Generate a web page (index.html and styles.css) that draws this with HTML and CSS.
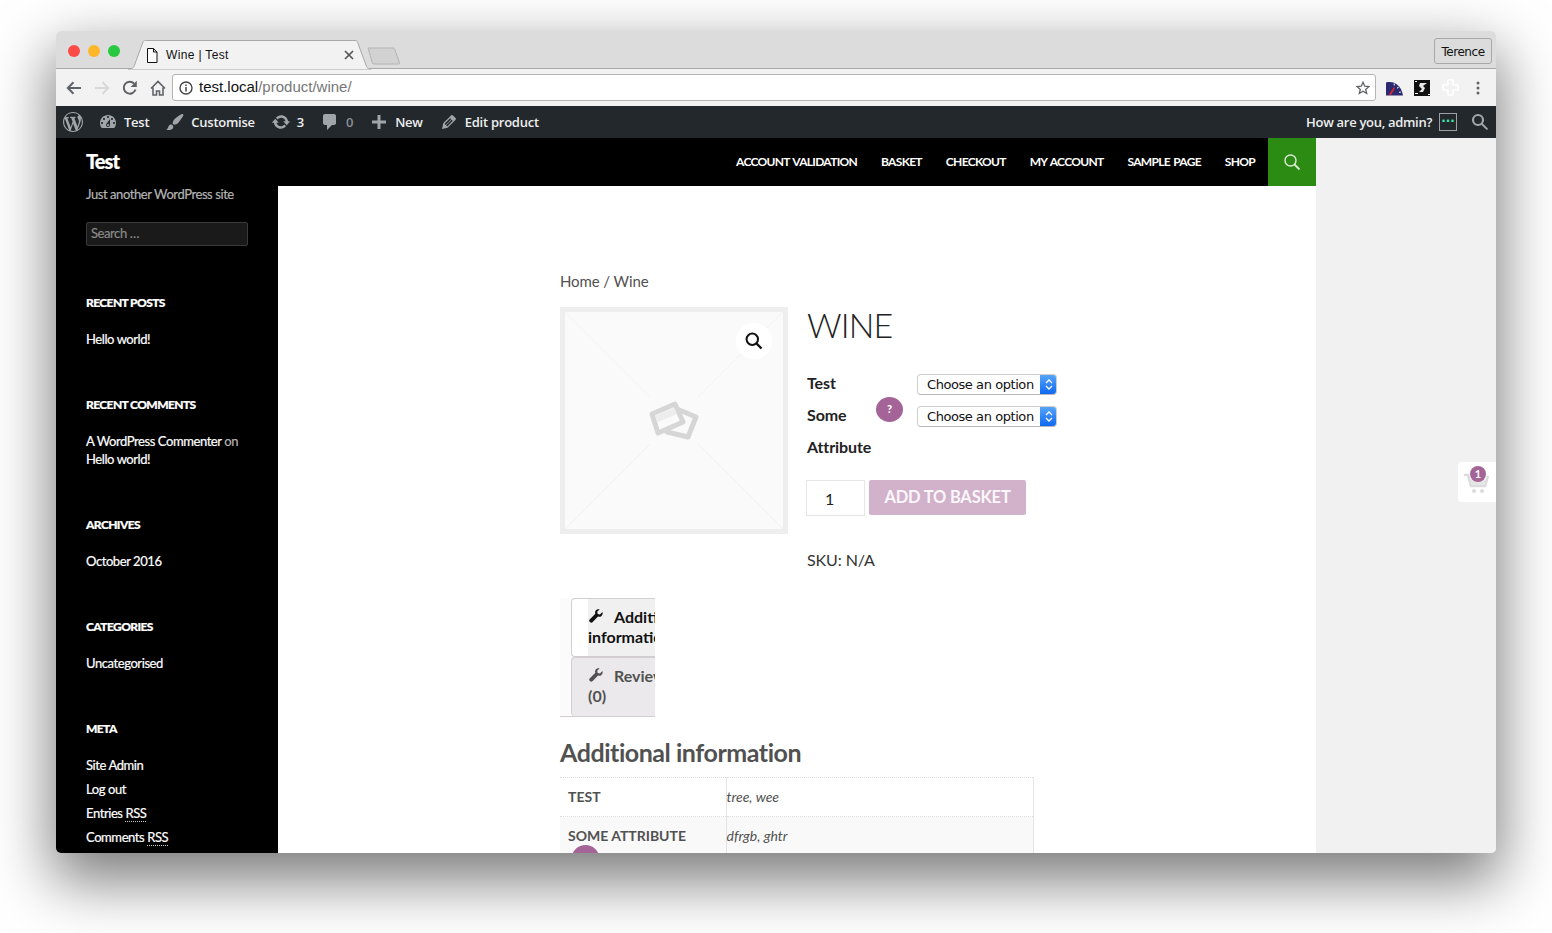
FILE: index.html
```html
<!DOCTYPE html>
<html lang="en">
<head>
<meta charset="utf-8">
<title>Wine | Test</title>
<link rel="stylesheet" href="styles.css">
</head>
<body>
<div class="window">
  <div class="tabbar">
    <div class="lights"><span class="light red"></span><span class="light yellow"></span><span class="light green"></span></div>
    <div class="tab">
      <svg class="tab-shape" width="243" height="30" viewBox="0 0 243 30"><path d="M0 28.500h3c1.500 0 2.400-.6 3-2L15 2c.5-1.100 1-1.500 2.500-1.500H227c1.500 0 2 .4 2.500 1.500l9 24.500c.6 1.400 1.500 2 3 2H243V30H0z" fill="#f2f2f2" stroke="#a8a8a8"/></svg>
      <svg class="tab-doc" width="12" height="15" viewBox="0 0 12 15"><path d="M1.500.5h6l3.500 3.500v10.500h-9.500zM7.500.5V4H11" fill="#fff" stroke="#111" stroke-width="1"/></svg>
      <span class="tab-title">Wine | Test</span>
      <svg class="tab-close" width="10" height="10" viewBox="0 0 10 10"><path d="M1 1l8 8M9 1L1 9" stroke="#555" stroke-width="1.700"/></svg>
    </div>
    <svg class="newtab" width="34" height="18" viewBox="0 0 34 18"><path d="M1 1h25c.8 0 1.300.3 1.600 1l5 14c.2.600-.2 1-.8 1H7c-.8 0-1.300-.3-1.600-1z" fill="#d2d2d2" stroke="#b4b4b4"/></svg>
    <div class="profile">Terence</div>
  </div>
  <div class="toolbar">
    <svg class="nav-ico" width="16" height="14" viewBox="0 0 16 14"><path d="M15 7H2M7.500 1.200L1.800 7l5.700 5.800" fill="none" stroke="#5f6368" stroke-width="2"/></svg>
    <svg class="nav-ico" width="16" height="14" viewBox="0 0 16 14"><path d="M1 7h13M8.500 1.200L14.200 7l-5.700 5.800" fill="none" stroke="#d8d8d8" stroke-width="2"/></svg>
    <svg class="nav-ico" width="16" height="16" viewBox="0 0 16 16"><path d="M13.500 9.500A6 6 0 1 1 12.200 3.600" fill="none" stroke="#5f6368" stroke-width="2"/><path d="M14.800.8v6.200H8.600z" fill="#5f6368"/></svg>
    <svg class="nav-ico" width="16" height="16" viewBox="0 0 16 16"><path d="M1 8.500L8 1.500l7 7M3 7.500V15h3.500v-4h3v4H13V7.500" fill="none" stroke="#5f6368" stroke-width="1.600"/></svg>
    <div class="omnibox">
      <svg class="info" width="14" height="14" viewBox="0 0 14 14"><circle cx="7" cy="7" r="6" fill="none" stroke="#444" stroke-width="1.400"/><path d="M7 6v4.500M7 3.400v1.500" stroke="#444" stroke-width="1.500"/></svg>
      <span class="url"><span class="url-host">test.local</span>/product/wine/</span>
      <svg class="star" width="14" height="14" viewBox="0 0 14 14"><path d="M7 1.300l1.700 3.900 4.200.4-3.200 2.800 1 4.100L7 10.300l-3.700 2.200 1-4.100L1.100 5.600l4.200-.4z" fill="none" stroke="#5f6368" stroke-width="1.300"/></svg>
    </div>
    <svg class="ext" width="17" height="16" viewBox="0 0 17 16"><path d="M0 15.500V2.500C8 .5 15 5 17 15.500z" fill="#2c2a6e"/><path d="M3 14.500L8 7l1 1-4 7z" fill="#e3232f"/><path d="M8 3.500l.5 2M12.500 7l-1.300 1.300M15 12l-2 .3" stroke="#cfd4ee" stroke-width="1.200"/></svg>
    <svg class="ext ext-second" width="17" height="16" viewBox="0 0 17 16"><rect width="16" height="16" fill="#111"/><path d="M6 3h7L9 6l2 2-2 4H5l3-3-3-3z" fill="#e8e8e8"/><path d="M1 1.500h2M14 14.500h2M1 13.500h3" stroke="#fff"/></svg>
    <svg class="ext ext-ghost" width="17" height="17" viewBox="0 0 17 17"><path d="M6 1h5v5h5v5h-5v5H6v-5H1V6h5z" fill="none" stroke="#fff" stroke-width="1.600" stroke-linejoin="round"/></svg>
    <svg class="ext-menu" width="4" height="14" viewBox="0 0 4 14"><path d="M2 0.500a1.500 1.500 0 1 1 0 3 1.500 1.500 0 0 1 0-3zm0 5a1.500 1.500 0 1 1 0 3 1.500 1.500 0 0 1 0-3zm0 5a1.500 1.500 0 1 1 0 3 1.500 1.500 0 0 1 0-3z" fill="#5f6368"/></svg>
  </div>
  <div class="adminbar">
    <a class="ab-logo"><svg width="20" height="20" viewBox="0 0 20 20"><path class="ab-fill" d="M20 10c0-5.510-4.490-10-10-10C4.480 0 0 4.490 0 10c0 5.520 4.480 10 10 10 5.510 0 10-4.480 10-10zM7.780 15.370L4.370 6.220c.55-.02 1.170-.08 1.170-.08.5-.06.44-1.130-.06-1.110 0 0-1.450.11-2.370.11-.18 0-.37 0-.58-.01C4.120 2.690 6.870 1.110 10 1.110c2.330 0 4.450.87 6.050 2.340-.68-.11-1.650.39-1.650 1.580 0 .74.45 1.360.9 2.100.35.61.55 1.360.55 2.460 0 1.490-1.400 5-1.400 5l-3.030-8.370c.54-.02.82-.17.82-.17.5-.05.44-1.250-.06-1.220 0 0-1.440.12-2.380.12-.87 0-2.330-.12-2.330-.12-.5-.03-.56 1.200-.06 1.220l.92.08 1.260 3.410zM17.410 10c.24-.64.74-1.870.43-4.250.7 1.290 1.050 2.710 1.050 4.250 0 3.290-1.730 6.240-4.400 7.780.97-2.590 1.940-5.200 2.920-7.780zM6.100 18.090C3.120 16.650 1.110 13.530 1.110 10c0-1.300.23-2.480.72-3.590C3.250 10.300 4.670 14.200 6.100 18.090zm4.030-6.630l2.580 6.980c-.86.29-1.760.45-2.710.45-.79 0-1.570-.11-2.290-.33.81-2.380 1.620-4.740 2.420-7.100z"/></svg></a>
    <a class="ab-item"><svg width="20" height="20" viewBox="0 0 20 20"><path class="ab-fill" d="M3.760 16h12.480c1.100-1.370 1.760-3.110 1.760-5 0-4.420-3.580-8-8-8s-8 3.580-8 8c0 1.890.66 3.630 1.760 5zM10 4c.55 0 1 .45 1 1s-.45 1-1 1-1-.45-1-1 .45-1 1-1zM6 6c.55 0 1 .45 1 1s-.45 1-1 1-1-.45-1-1 .45-1 1-1zm8 0c.55 0 1 .45 1 1s-.45 1-1 1-1-.45-1-1 .45-1 1-1zm-5.370 5.550L12 7v6c0 1.100-.9 2-2 2s-2-.9-2-2c0-.57.24-1.080.63-1.450zM4 10c.55 0 1 .45 1 1s-.45 1-1 1-1-.45-1-1 .45-1 1-1zm12 0c.55 0 1 .45 1 1s-.45 1-1 1-1-.45-1-1 .45-1 1-1zm-5 3c0-.55-.45-1-1-1s-1 .45-1 1 .45 1 1 1 1-.45 1-1z" fill-rule="evenodd"/></svg>Test</a>
    <a class="ab-item"><svg width="20" height="20" viewBox="0 0 20 20"><path class="ab-fill" d="M18.330 3.570s.27-.8-.31-1.360c-.53-.52-1.220-.24-1.220-.24-.61.3-5.760 3.470-7.670 5.570-.86.96-2.060 3.790-1.090 4.820.92.98 3.960-.17 4.790-1 2.060-2.060 5.210-7.170 5.500-7.790zM1.400 17.650c2.370-1.560 1.460-3.410 3.230-4.640.93-.65 2.220-.62 3.080.29.63.67.8 2.570-.16 3.460-1.570 1.450-4 1.550-6.150.89z"/></svg>Customise</a>
    <a class="ab-item"><svg width="20" height="20" viewBox="0 0 20 20"><path class="ab-fill" d="M10.200 3.280c3.530 0 6.430 2.610 6.920 6h2.080l-3.500 4-3.500-4h2.320c-.45-1.970-2.210-3.450-4.320-3.450-1.450 0-2.730.71-3.540 1.780L4.950 5.660C6.230 4.200 8.110 3.280 10.200 3.280zm-.4 13.440c-3.520 0-6.430-2.610-6.920-6H.8l3.500-4c1.170 1.330 2.330 2.670 3.500 4H5.480c.45 1.970 2.210 3.450 4.320 3.450 1.450 0 2.730-.71 3.540-1.780l1.710 1.950c-1.280 1.460-3.150 2.380-5.250 2.380z"/></svg>3</a>
    <a class="ab-item ab-dim"><svg width="20" height="20" viewBox="0 0 20 20"><path class="ab-fill" d="M5 2h9c1.100 0 2 .9 2 2v7c0 1.100-.9 2-2 2h-2l-5 5v-5H5c-1.100 0-2-.9-2-2V4c0-1.100.9-2 2-2z"/></svg>0</a>
    <a class="ab-item"><svg width="20" height="20" viewBox="0 0 20 20"><path class="ab-fill" d="M17 8.500v3h-5.500V17h-3v-5.500H3v-3h5.500V3h3v5.500z"/></svg>New</a>
    <a class="ab-item"><svg width="20" height="20" viewBox="0 0 20 20"><path class="ab-fill" d="M13.890 3.390l2.710 2.720c.46.46.42 1.240.03 1.640l-8.010 8.020-5.560 1.160 1.160-5.580s7.600-7.630 7.990-8.030c.39-.39 1.220-.39 1.680.07zm-2.730 2.790l-5.590 5.610 1.110 1.110 5.540-5.650zm-2.970 8.230l5.580-5.600-1.070-1.080-5.590 5.600z"/></svg>Edit product</a>
    <div class="ab-right">
      <span class="ab-howdy">How are you, admin?</span>
      <span class="ab-avatar">···</span>
      <svg class="ab-search" width="20" height="20" viewBox="0 0 20 20"><circle class="ab-ring" cx="8" cy="8" r="5"/><path class="ab-fill" d="M11 12.400l1.400-1.400 5.200 5.200c.4.400.4 1 0 1.400-.4.400-1 .4-1.400 0z"/></svg>
    </div>
  </div>
  <div class="site">
    <aside class="sidebar">
      <div class="site-title">Test</div>
      <p class="tagline">Just another WordPress site</p>
      <div class="side-search">Search …</div>
      <section class="widget">
        <h2>Recent Posts</h2>
        <ul><li>Hello world!</li></ul>
      </section>
      <section class="widget">
        <h2>Recent Comments</h2>
        <p class="comment">A WordPress Commenter <span class="on">on</span> Hello world!</p>
      </section>
      <section class="widget">
        <h2>Archives</h2>
        <ul><li>October 2016</li></ul>
      </section>
      <section class="widget">
        <h2>Categories</h2>
        <ul><li>Uncategorised</li></ul>
      </section>
      <section class="widget">
        <h2>Meta</h2>
        <ul class="meta">
          <li>Site Admin</li>
          <li>Log out</li>
          <li>Entries <abbr>RSS</abbr></li>
          <li>Comments <abbr>RSS</abbr></li>
        </ul>
      </section>
    </aside>
    <div class="main">
      <header class="topnav">
        <nav class="menu">
          <a>Account Validation</a><a>Basket</a><a>Checkout</a><a>My Account</a><a>Sample Page</a><a>Shop</a>
        </nav>
        <div class="nav-search"><svg width="18" height="18" viewBox="0 0 18 18"><circle cx="7.500" cy="7.500" r="5.500" fill="none" stroke="#dfe9d8" stroke-width="1.400"/><path d="M11.500 11.500l5 5" stroke="#dfe9d8" stroke-width="1.800"/></svg></div>
      </header>
      <div class="content">
        <div class="crumbs">Home / Wine</div>
        <div class="product">
          <div class="gallery">
            <svg class="placeholder" width="218" height="217" viewBox="0 0 218 217">
              <path d="M0 0L85 85M218 0L133 85M0 217L85 132M218 217L133 132" stroke="#f2f2f2"/>
              <path d="M112 97l19 8-8 20-21-5z" fill="#fafafa" stroke="#d6d6d6" stroke-width="5" stroke-linejoin="round"/>
              <path d="M87 102l23-10 8 18-25 11z" fill="#fafafa" stroke="#d6d6d6" stroke-width="5" stroke-linejoin="round"/>
              <path d="M90 104l19-8 3 6-19 8z" fill="#ededed"/>
            </svg>
            <span class="zoom"><svg width="18" height="18" viewBox="0 0 18 18"><circle cx="7.300" cy="7.300" r="5.700" fill="none" stroke="#111" stroke-width="2"/><path d="M11.500 11.500l5 5" stroke="#111" stroke-width="2.400"/></svg></span>
          </div>
          <div class="summary">
            <h1>Wine</h1>
            <div class="variations">
              <div class="var-row">
                <div class="var-label">Test</div>
                <div class="select"><span class="select-text">Choose an option</span><span class="select-arrow"><svg width="8" height="13" viewBox="0 0 8 13"><path d="M1 5l3-3 3 3M1 8l3 3 3-3" fill="none" stroke="#fff" stroke-width="1.300"/></svg></span></div>
              </div>
              <div class="var-row">
                <div class="var-label">Some <span class="help">?</span><br>Attribute</div>
                <div class="select"><span class="select-text">Choose an option</span><span class="select-arrow"><svg width="8" height="13" viewBox="0 0 8 13"><path d="M1 5l3-3 3 3M1 8l3 3 3-3" fill="none" stroke="#fff" stroke-width="1.300"/></svg></span></div>
              </div>
            </div>
            <div class="cart-row">
              <div class="qty">1</div>
              <div class="basket">Add to basket</div>
            </div>
            <div class="sku">SKU: N/A</div>
          </div>
        </div>
        <ul class="tabs">
          <li class="tab-item active"><a class="tab-link"><svg class="wrench" width="14" height="14" viewBox="0 0 15 15"><path d="M14.400 3.200l-2.700 2.600-2.300-.5-.6-2.300L11.500.4C9.700-.2 7.700.5 6.900 2.100c-.5 1-.5 2.100-.1 3L.7 11.200c-.7.700-.7 1.800 0 2.500l.5.500c.7.700 1.800.7 2.500 0l6-6.100c1 .4 2.100.4 3.100-.1 1.600-.9 2.200-3 1.600-4.800z"/></svg>Additional<br>information</a></li>
          <li class="tab-item"><a class="tab-link"><svg class="wrench" width="14" height="14" viewBox="0 0 15 15"><path d="M14.400 3.200l-2.700 2.600-2.300-.5-.6-2.300L11.500.4C9.700-.2 7.700.5 6.900 2.100c-.5 1-.5 2.100-.1 3L.7 11.200c-.7.700-.7 1.800 0 2.500l.5.500c.7.700 1.800.7 2.500 0l6-6.100c1 .4 2.100.4 3.100-.1 1.600-.9 2.200-3 1.600-4.800z"/></svg>Reviews<br>(0)</a></li>
        </ul>
        <h2 class="add-title">Additional information</h2>
        <table class="attrs">
          <tr><th>Test</th><td>tree, wee</td></tr>
          <tr class="alt"><th>Some Attribute<span class="help help-th">?</span></th><td>dfrgb, ghtr</td></tr>
        </table>
      </div>
    </div>
    <div class="rightcol"></div>
    <div class="floatcart">
      <svg width="28" height="24" viewBox="0 0 28 24"><path d="M1 5h4l3 11h14l3-10" fill="none" stroke="#dcdcdc" stroke-width="2.500"/><path d="M7 9h16l-2 6H9z" fill="#e6e6e6"/><circle cx="11" cy="21" r="2" fill="#dcdcdc"/><circle cx="19" cy="21" r="2" fill="#dcdcdc"/></svg>
      <span class="cart-badge">1</span>
    </div>
  </div>
</div>
</body>
</html>
```
FILE: styles.css
```css
* { box-sizing: border-box; }
html, body { margin: 0; height: 100%; background: #fff; overflow: hidden; }
body { padding: 31px 56px 0; font-family: Lato, "Liberation Sans", sans-serif; }
ul { list-style: none; margin: 0; padding: 0; }
h1, h2, p { margin: 0; }

.window {
  position: relative;
  width: 1440px;
  height: 822px;
  border-radius: 5px;
  overflow: hidden;
  display: flex;
  flex-direction: column;
  box-shadow: 0 24px 60px 4px rgba(0, 0, 0, .52);
}

/* tab strip */
.tabbar {
  height: 38px;
  flex: none;
  display: flex;
  align-items: flex-start;
  background: #dcdcdc;
  border-bottom: 1px solid #a9a9a9;
  position: relative;
}
.lights { display: flex; gap: 8px; margin: 14px 0 0 12px; }
.light { width: 12px; height: 12px; border-radius: 50%; }
.red { background: #fc4a46; }
.yellow { background: #fdb728; }
.green { background: #28c940; }
.tab {
  position: relative;
  width: 243px;
  height: 30px;
  margin: 9px 0 0 8px;
  display: flex;
  align-items: center;
  padding: 0 0 0 18px;
}
.tab-shape { position: absolute; left: 0; top: 0; }
.tab-doc, .tab-title, .tab-close { position: relative; }
.tab-title { margin-left: 8px; font: 12px "Liberation Sans", sans-serif; letter-spacing: .35px; color: #111; }
.tab-close { margin-left: 115px; }
.newtab { margin: 16px 0 0 -4px; }
.profile {
  margin: 7px 4px 0 auto;
  height: 26px;
  width: 58px;
  border: 1px solid #a8a8a8;
  border-radius: 3px;
  font: 12px/26px "DejaVu Sans", sans-serif;
  letter-spacing: -.45px;
  text-align: center;
  color: #111;
}

/* toolbar */
.toolbar {
  height: 37px;
  flex: none;
  background: #f2f2f2;
  display: flex;
  align-items: center;
  padding: 0 15px 0 10px;
}
.nav-ico { margin-right: 12px; flex: none; }
.omnibox {
  flex: none;
  width: 1204px;
  height: 27px;
  margin-left: -6px;
  background: #fff;
  border: 1px solid #b4b4b4;
  border-radius: 3px;
  display: flex;
  align-items: center;
  padding: 0 5px 0 6px;
}
.url { margin-left: 6px; margin-top: -2px; font: 15px "Liberation Sans", sans-serif; color: #777; }
.url-host { color: #111; }
.star { margin-left: auto; }
.ext { margin-left: 10px; flex: none; }
.ext-second { margin-left: 11px; }
.ext-ghost { margin-left: 11px; }
.ext-menu { margin-left: 17px; flex: none; }

/* admin bar */
.adminbar {
  height: 32px;
  flex: none;
  background: #23282d;
  display: flex;
  align-items: center;
  padding-left: 7px;
  font: 600 13px "Open Sans", "Liberation Sans", sans-serif;
  letter-spacing: -.25px;
  color: #eee;
}
.ab-fill { fill: #a0a5aa; }
.ab-ring { fill: none; stroke: #a0a5aa; stroke-width: 2.200; }
.ab-logo { display: flex; margin-right: 15px; }
.ab-item { display: flex; align-items: center; gap: 6px; margin-right: 16px; }
.ab-item svg { flex: none; }
.ab-dim { color: #8a8f94; }
.ab-right { margin-left: auto; display: flex; align-items: center; padding-right: 6px; }
.ab-howdy { letter-spacing: -.3px; }
.ab-avatar {
  width: 18px;
  height: 18px;
  margin: 0 13px 0 7px;
  border: 1px solid #9aa0a6;
  color: #3ee6b0;
  font: 700 12px/15px "DejaVu Sans", sans-serif;
  letter-spacing: 0;
  text-align: center;
}

/* site */
.site { flex: 1; min-height: 0; display: flex; background: #f1f1f1; position: relative; }
.sidebar {
  flex: none;
  width: 222px;
  background: #000;
  color: #fff;
  padding: 11px 30px 0;
  overflow: hidden;
  font-size: 13px;
  letter-spacing: -.42px;
  -webkit-text-stroke: .2px currentColor;
}
.site-title { font-size: 20px; line-height: 24px; font-weight: 900; letter-spacing: -.9px; }
.tagline { margin-top: 12px; font-size: 13px; line-height: 18px; color: #b4b4b4; }
.side-search {
  margin-top: 19px;
  height: 24px;
  width: 162px;
  background: #1a1a1a;
  border: 1px solid #3a3a3a;
  border-radius: 2px;
  padding-left: 4px;
  line-height: 20px;
  color: #8a8a8a;
}
.widget { margin-top: 48px; }
.widget h2 { font-size: 12px; line-height: 18px; font-weight: 900; text-transform: uppercase; letter-spacing: -.6px; }
.widget ul, .comment { margin-top: 18px; line-height: 18px; }
.widget .meta li { line-height: 24px; }
.widget .meta { margin-top: 15px; }
.on { color: #b4b4b4; }
abbr { border-bottom: 1px dotted #ccc; }

.main { flex: none; width: 1038px; background: #fff; overflow: hidden; display: flex; flex-direction: column; }
.topnav { flex: none; height: 48px; background: #000; display: flex; justify-content: flex-end; align-items: center; }
.menu { display: flex; gap: 24px; margin: -2px 13px 0 0; font-size: 12px; font-weight: 700; text-transform: uppercase; letter-spacing: -.7px; word-spacing: 1px; color: #fff; }
.nav-search { width: 48px; height: 48px; background: #2b8b13; display: flex; align-items: center; justify-content: center; }
.rightcol { flex: 1; }

.content { margin-left: 282px; width: 474px; padding-top: 86px; color: #515151; font-size: 16px; }
.crumbs { font-size: 15px; line-height: 18px; letter-spacing: -.1px; }
.product { display: flex; margin-top: 17px; }
.gallery { position: relative; flex: none; width: 228px; height: 227px; border: 5px solid #eee; background: #fafafa; }
.placeholder { display: block; }
.zoom {
  position: absolute;
  right: 11px;
  top: 11px;
  width: 36px;
  height: 36px;
  background: #fff;
  border-radius: 50%;
  display: flex;
  align-items: center;
  justify-content: center;
}
.summary { margin-left: 19px; flex: 1; }
h1 { margin-top: -2px; font-size: 34px; line-height: 40px; font-weight: 300; color: #222; text-transform: uppercase; letter-spacing: -.9px; }
.variations { margin-top: 22px; }
.var-row { display: flex; align-items: flex-start; }
.var-label { width: 110px; font-weight: 700; color: #222; line-height: 32px; letter-spacing: -.1px; position: relative; }
.help {
  display: inline-block;
  width: 27px;
  height: 25px;
  border-radius: 50%;
  background: #a46497;
  color: #fff;
  font-size: 11px;
  line-height: 24px;
  font-weight: 900;
  text-align: center;
  position: absolute;
  left: 69px;
  top: -2px;
}
.select {
  margin-top: 7px;
  width: 140px;
  height: 21px;
  background: #fff;
  border: 1px solid #cdcdcd;
  border-bottom-color: #b8b8b8;
  border-radius: 4px;
  display: flex;
  justify-content: space-between;
  overflow: hidden;
}
.select-text { padding-left: 9px; font: 13px/19px "DejaVu Sans", sans-serif; letter-spacing: -.43px; color: #111; }
.select-arrow {
  width: 17px;
  margin: -1px -1px -1px 0;
  background: linear-gradient(#5aa8fb, #0a66f2);
  display: flex;
  align-items: center;
  justify-content: center;
}
.cart-row { display: flex; gap: 4px; margin: 17px 0 0 -1px; }
.qty { width: 59px; height: 36px; border: 1px solid #e6e6e6; padding-left: 18px; line-height: 36px; color: #222; }
.basket {
  width: 157px;
  height: 35px;
  background: #d2b1ca;
  border-radius: 2px;
  color: #fbf7fa;
  font-size: 16.500px;
  font-weight: 700;
  line-height: 35px;
  text-align: center;
  text-transform: uppercase;
  letter-spacing: -.2px;
}
.sku { margin-top: 35px; line-height: 18px; color: #333; letter-spacing: -.1px; }

.tabs { margin-top: 29px; width: 95px; padding-left: 11px; background: #fbfbfb; border-bottom: 1px solid #d3ced2; overflow: hidden; }
.tab-item {
  height: 59px;
  padding: 0 0 0 16px;
  background: #ebe9eb;
  border: 1px solid #d3ced2;
  border-width: 1px 0 1px 1px;
  border-radius: 4px 0 0 4px;
  font-weight: 700;
  line-height: 20px;
  overflow: hidden;
}
.tab-item + .tab-item { border-bottom: 0; }
.tab-item.active { background: #fff; color: #111; }
.tab-link { display: block; height: 100%; padding-top: 8px; background: #ebe9eb; white-space: nowrap; }
.active .tab-link { background: #f0f0f0; }
.wrench { fill: currentColor; margin: 0 11px 0 1px; }
.add-title { margin-top: 20px; font-size: 25px; line-height: 30px; font-weight: 700; letter-spacing: -.45px; color: #515151; }
.attrs { margin-top: 10px; width: 474px; border-collapse: collapse; table-layout: fixed; font-size: 14px; }
.attrs tr { border-top: 1px dotted #ddd; height: 38px; }
.attrs th { width: 166px; border-right: 1px solid #e4e4e4; padding: 0 0 0 8px; text-align: left; text-transform: uppercase; font-weight: 700; vertical-align: top; line-height: 38px; }
.attrs td { border-right: 1px solid #e4e4e4; padding: 0; font-style: italic; vertical-align: top; line-height: 38px; }
.alt { background: #f9f9f9; }
.help-th { position: static; display: block; margin: -10px 0 0 4px; }

.floatcart {
  position: absolute;
  right: 0;
  top: 324px;
  width: 38px;
  height: 40px;
  background: #fff;
  border-radius: 4px 0 0 4px;
  display: flex;
  align-items: center;
  justify-content: center;
}
.cart-badge {
  position: absolute;
  left: 12px;
  top: 4px;
  width: 16px;
  height: 16px;
  border-radius: 50%;
  background: #a46497;
  color: #fff;
  font-size: 11px;
  font-weight: 700;
  line-height: 16px;
  text-align: center;
}
```
